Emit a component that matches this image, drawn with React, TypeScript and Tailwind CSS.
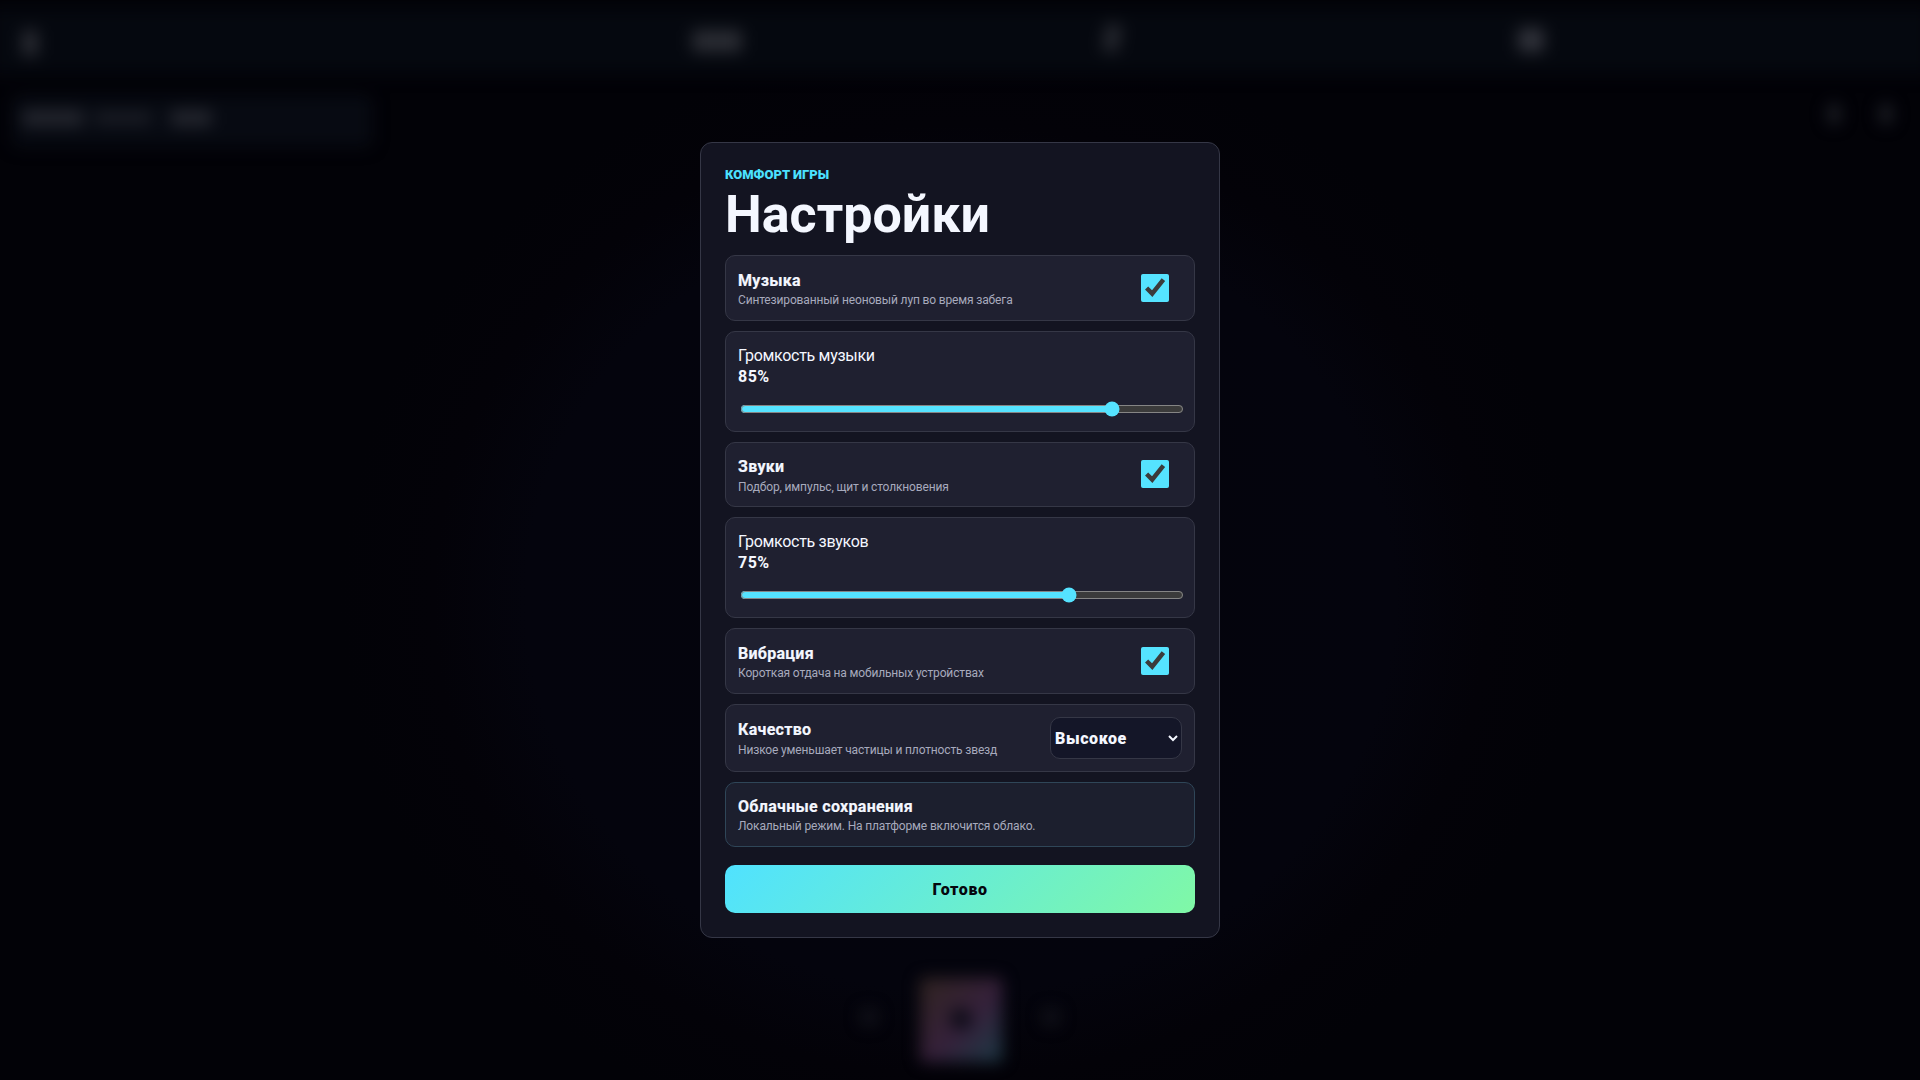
import React from "react";

function Info({ title, sub }: { title: string; sub: string }) {
  return (
    <div className="flex flex-col pt-[3px]">
      <b className="text-[16px] leading-[21px] font-bold tracking-[0.3px] text-[#f4f7ff] [-webkit-text-stroke:0.2px_#f4f7ff]">{title}</b>
      <span className="mt-[1.5px] text-[12px] leading-[17px] tracking-[-0.15px] text-[#a7aabd]">{sub}</span>
    </div>
  );
}

function ToggleRow({ title, sub }: { title: string; sub: string }) {
  return (
    <label className="flex h-[65.6px] items-center justify-between rounded-[10px] border border-[#353746] bg-[#1f2030] pl-3 pr-[25px]">
      <Info title={title} sub={sub} />
      <input type="checkbox" defaultChecked className="m-0 h-7 w-7 accent-[#55e3ff]" />
    </label>
  );
}

function SliderRow({ title, value }: { title: string; value: number }) {
  return (
    <label className="flex h-[101px] flex-col rounded-[10px] border border-[#353746] bg-[#1f2030] px-3 pt-[13px]">
      <span className="text-[16px] leading-[21px] tracking-[-0.3px] text-[#f4f7ff]">{title}</span>
      <b className="text-[16px] leading-[21px] font-bold tracking-[0.5px] text-[#f4f7ff]">{value}%</b>
      <input type="range" min={0} max={100} defaultValue={value} className="mx-[2px] mt-[14px] h-4 w-full accent-[#55e3ff]" />
    </label>
  );
}

export default function App() {
  return (
    <div className="relative flex h-screen w-full items-start justify-center overflow-hidden bg-[radial-gradient(ellipse_620px_560px_at_960px_600px,#04040c_0%,#04040d_70%,#030208_85%,#020207_100%)] pt-[142px] font-['Roboto',sans-serif] [color-scheme:dark]">
      {/* blurred game behind the dialog */}
      <div className="absolute inset-0 blur-[8px]" aria-hidden>
        <div className="absolute left-[-10px] right-[-10px] top-[8px] h-[66px] bg-[#05080f]" />
        <div className="absolute left-[12px] top-[95px] h-[52px] w-[360px] rounded-lg bg-[#070a12]" />
        <div className="absolute left-[22px] top-[30px] h-[26px] w-[16px] rounded bg-[#2a2c33]" />
        <div className="absolute left-[22px] top-[110px] h-[16px] w-[62px] rounded bg-[#24262e]" />
        <div className="absolute left-[94px] top-[112px] h-[12px] w-[58px] rounded bg-[#1c1e26]" />
        <div className="absolute left-[170px] top-[110px] h-[16px] w-[42px] rounded bg-[#24262e]" />
        <div className="absolute left-[692px] top-[30px] h-[22px] w-[50px] rounded bg-[#2a2c33]" />
        <div className="absolute left-[1104px] top-[24px] h-[28px] w-[16px] rotate-12 rounded bg-[#26282f]" />
        <div className="absolute left-[1518px] top-[28px] h-[24px] w-[26px] rounded bg-[#30323a]" />
        <div className="absolute left-[1828px] top-[104px] h-[20px] w-[12px] rounded bg-[#1e2028]" />
        <div className="absolute left-[1880px] top-[104px] h-[20px] w-[12px] rounded bg-[#1e2028]" />
        <div className="absolute left-[920px] top-[978px] h-[84px] w-[82px] rounded bg-[linear-gradient(135deg,#302420,#35203a_55%,#1c3a46)]" />
        <div className="absolute left-[950px] top-[1008px] h-[22px] w-[22px] rounded-full bg-[#0e0c18]" />
        <div className="absolute left-[860px] top-[1008px] h-[18px] w-[18px] rounded-full bg-[#12131b]" />
        <div className="absolute left-[1042px] top-[1008px] h-[18px] w-[18px] rounded-full bg-[#12131b]" />
      </div>

      <div className="relative flex h-[796px] w-[520px] flex-col rounded-[12px] border border-[#353746] bg-[#131421] px-6 pt-[24px]">
        <div className="text-[13px] leading-[16px] font-black text-[#4be1ff]">КОМФОРТ ИГРЫ</div>
        <h1 className="mt-[2px] text-[52px] leading-[60px] font-bold text-[#f4f7ff]">Настройки</h1>
        <div className="mt-[10px] flex flex-col gap-[10px]">
          <ToggleRow title="Музыка" sub="Синтезированный неоновый луп во время забега" />
          <SliderRow title="Громкость музыки" value={85} />
          <ToggleRow title="Звуки" sub="Подбор, импульс, щит и столкновения" />
          <SliderRow title="Громкость звуков" value={75} />
          <ToggleRow title="Вибрация" sub="Короткая отдача на мобильных устройствах" />
          <div className="flex h-[67.8px] items-center justify-between rounded-[10px] border border-[#353746] bg-[#1f2030] pl-3 pr-[12px]">
            <Info title="Качество" sub="Низкое уменьшает частицы и плотность звезд" />
            <select className="h-[42px] w-[132px] rounded-[10px] border border-[#353746] bg-[#141628] pl-0 pt-[2px] text-[16px] font-black tracking-[0.6px] text-[#f4f7ff]">
              <option>Высокое</option>
            </select>
          </div>
          <div className="flex h-[65px] items-center rounded-[10px] border border-[#2f4658] bg-[#1c1f2e] pl-3">
            <Info title="Облачные сохранения" sub="Локальный режим. На платформе включится облако." />
          </div>
        </div>
        <button className="mt-[18.6px] h-[47.5px] w-full rounded-[10px] bg-[linear-gradient(135deg,#50e2ff,#80f8a6)] pt-[3px] text-[16px] font-black tracking-[0.6px] text-[#05070d]">
          Готово
        </button>
      </div>
    </div>
  );
}
